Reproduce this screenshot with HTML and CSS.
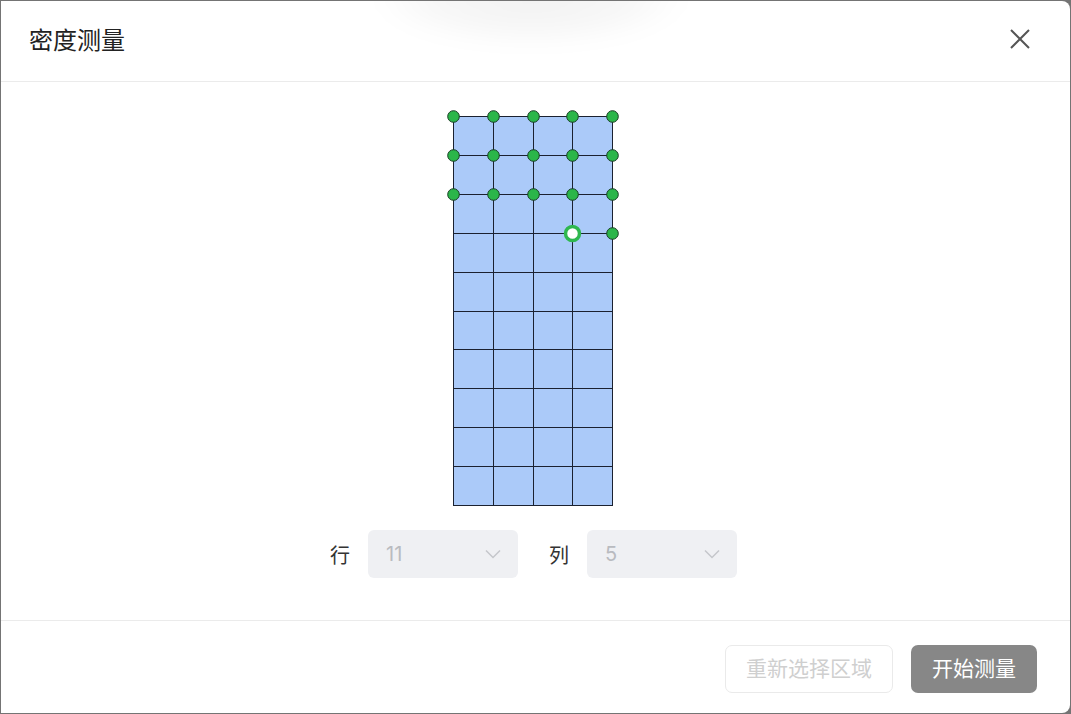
FILE: index.html
```html
<!DOCTYPE html>
<html lang="zh-CN">
<head>
    <meta charset="UTF-8">
    <meta name="viewport" content="width=device-width, initial-scale=1.0">
    <title>密度测量</title>
    <link rel="stylesheet" href="styles.css">
</head>
<body>
    <div class="dialog">
        <div class="top-shadow"></div>

        <div class="dialog-header">
            <span class="dialog-title">密度测量</span>
            <span class="close">
                <svg width="22" height="22" viewBox="0 0 22 22">
                    <path d="M2 2 L20 20 M20 2 L2 20" stroke="#555" stroke-width="2" fill="none"/>
                </svg>
            </span>
        </div>

        <div class="dialog-body">
            <!-- Grade de medição -->
            <svg id="grid" class="grid" width="175" height="405" viewBox="0 0 175 405"></svg>

            <div class="controls">
                <span class="label">行</span>
                <div class="select">
                    <span class="value">11</span>
                    <svg class="chevron" width="16" height="10" viewBox="0 0 16 10">
                        <path d="M1 1.5 L8 8.5 L15 1.5" stroke="#c4c6cb" stroke-width="1.5" fill="none"/>
                    </svg>
                </div>
                <span class="label label-gap">列</span>
                <div class="select">
                    <span class="value">5</span>
                    <svg class="chevron" width="16" height="10" viewBox="0 0 16 10">
                        <path d="M1 1.5 L8 8.5 L15 1.5" stroke="#c4c6cb" stroke-width="1.5" fill="none"/>
                    </svg>
                </div>
            </div>
        </div>

        <div class="dialog-footer">
            <button class="btn btn-ghost" disabled>重新选择区域</button>
            <button class="btn btn-primary">开始测量</button>
        </div>
    </div>

    <script>
        const svg = document.getElementById('grid');
        const NS = 'http://www.w3.org/2000/svg';
        const rows = 11;
        const cols = 5;
        const gridLeft = 8;
        const gridTop = 8;
        const gridW = 159;
        const gridH = 389;
        const dx = gridW / (cols - 1);
        const dy = gridH / (rows - 1);

        function el(name, attrs) {
            const node = document.createElementNS(NS, name);
            for (const k in attrs) node.setAttribute(k, attrs[k]);
            svg.appendChild(node);
            return node;
        }

        el('rect', { x: gridLeft, y: gridTop, width: gridW, height: gridH, fill: '#abcaf9' });

        for (let r = 0; r < rows; r++) {
            const y = Math.round(gridTop + r * dy) + 0.5;
            el('line', { x1: gridLeft, y1: y, x2: gridLeft + gridW + 1, y2: y, stroke: '#1b2130', 'stroke-width': 1 });
        }
        for (let c = 0; c < cols; c++) {
            const x = Math.round(gridLeft + c * dx) + 0.5;
            el('line', { x1: x, y1: gridTop, x2: x, y2: gridTop + gridH + 1, stroke: '#1b2130', 'stroke-width': 1 });
        }

        // Pontos já marcados: três linhas completas e parte da quarta
        for (let r = 0; r < 4; r++) {
            for (let c = 0; c < cols; c++) {
                const x = Math.round(gridLeft + c * dx) + 0.5;
                const y = Math.round(gridTop + r * dy) + 0.5;
                if (r === 3 && c === 3) {
                    el('circle', { cx: x, cy: y, r: 7, fill: '#fff', stroke: '#2fb84f', 'stroke-width': 3.5 });
                } else if (r < 3 || c === 4) {
                    el('circle', { cx: x, cy: y, r: 5.8, fill: '#2bb64a', stroke: '#173d22', 'stroke-width': 1 });
                }
            }
        }
    </script>
</body>
</html>
```

FILE: styles.css
```css
* {
    box-sizing: border-box;
}

body {
    margin: 0;
    padding: 1px;
    height: 714px;
    background: #747474;
    font-family: "Noto Sans CJK SC", "Noto Sans", sans-serif;
    overflow: hidden;
}

.dialog {
    position: relative;
    height: 712px;
    background: #fff;
    border-radius: 0 8px 8px 0;
    display: flex;
    flex-direction: column;
    overflow: hidden;
}

.top-shadow {
    position: absolute;
    top: -50px;
    left: 370px;
    width: 320px;
    height: 96px;
    border-radius: 50%;
    background: radial-gradient(ellipse at center, rgba(0, 0, 0, 0.05) 0%, rgba(0, 0, 0, 0.03) 45%, rgba(0, 0, 0, 0) 70%);
    filter: blur(10px);
    pointer-events: none;
}

.dialog-header {
    height: 81px;
    padding: 0 39px 0 28px;
    border-bottom: 1px solid #ebebeb;
    display: flex;
    align-items: center;
    justify-content: space-between;
}

.dialog-title {
    font-size: 24px;
    color: #222;
    line-height: 1;
    margin-top: -5px;
}

.close {
    display: flex;
    cursor: pointer;
    margin-top: -5px;
}

.dialog-body {
    flex: 1;
    padding: 26px 6px 0 0;
    border-bottom: 1px solid #ebebeb;
    display: flex;
    flex-direction: column;
    align-items: center;
}

.grid {
    display: block;
}

.controls {
    margin-top: 17px;
    margin-left: 2px;
    display: flex;
    align-items: center;
}

.label {
    font-size: 20px;
    color: #333;
    margin-right: 18px;
}

.label-gap {
    margin-left: 31px;
}

.select {
    width: 150px;
    height: 48px;
    background: #eff0f3;
    border-radius: 6px;
    padding: 0 17px 0 18px;
    display: flex;
    align-items: center;
    justify-content: space-between;
}

.value {
    font-size: 20px;
    color: #b9bbc0;
    font-family: "Inter", "Noto Sans", sans-serif;
}

.chevron {
    display: block;
}

.dialog-footer {
    height: 92px;
    padding: 0 33px 20px 0;
    display: flex;
    align-items: flex-end;
    justify-content: flex-end;
    gap: 18px;
}

.btn {
    height: 48px;
    border-radius: 7px;
    font-family: "Noto Sans CJK SC", sans-serif;
    font-size: 21px;
    line-height: 1;
    padding: 0 0 3px;
    cursor: pointer;
}

.btn-ghost {
    width: 168px;
    background: #fff;
    border: 1px solid #eaeaea;
    color: #cfcfcf;
}

.btn-primary {
    width: 126px;
    background: #878787;
    border: none;
    color: #fff;
}
```
